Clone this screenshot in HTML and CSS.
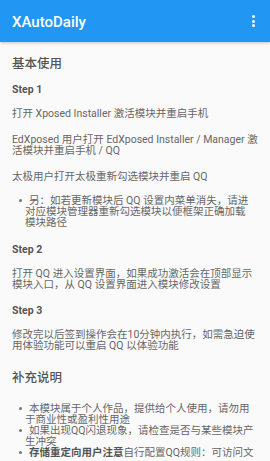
FILE: index.html
```html
<!DOCTYPE html>
<html lang="zh-CN">
<head>
<meta charset="utf-8">
<title>XAutoDaily</title>
<link rel="stylesheet" href="styles.css">
</head>
<body>
<header class="appbar">
  <span class="title">XAutoDaily</span>
  <span class="menu"><i></i><i></i><i></i></span>
</header>
<main class="content">
  <h2 class="section">基本使用</h2>
  <h3 class="step">Step 1</h3>
  <p class="text">打开 Xposed Installer 激活模块并重启手机</p>
  <p class="text">EdXposed 用户打开 EdXposed Installer / Manager 激活模块并重启手机 / QQ</p>
  <p class="text">太极用户打开太极重新勾选模块并重启 QQ</p>
  <ul class="list list-tight">
    <li>另：如若更新模块后 QQ 设置内菜单消失，请进对应模块管理器重新勾选模块以便框架正确加载模块路径</li>
  </ul>
  <h3 class="step">Step 2</h3>
  <p class="text">打开 QQ 进入设置界面，如果成功激活会在顶部显示模块入口，从 QQ 设置界面进入模块修改设置</p>
  <h3 class="step">Step 3</h3>
  <p class="text">修改完以后签到操作会在10分钟内执行，如需急迫使用体验功能可以重启 QQ 以体验功能</p>
  <h2 class="section section-gap">补充说明</h2>
  <ul class="list list-spaced">
    <li>本模块属于个人作品，提供给个人使用，请勿用于商业性或盈利性用途</li>
    <li>如果出现QQ闪退现象，请检查是否与某些模块产生冲突</li>
    <li><b class="strong">存储重定向用户注意</b>自行配置QQ规则：可访问文</li>
  </ul>
</main>
</body>
</html>
```
FILE: styles.css
```css
html, body {
  margin: 0;
  padding: 0;
}
body {
  background: #fafafa;
  font-family: Roboto, "Noto Sans CJK SC", sans-serif;
  color: #666;
}
.appbar {
  height: 42px;
  background: #2196f3;
  box-shadow: 0 1px 3px rgba(0, 0, 0, 0.22);
  display: flex;
  align-items: center;
  justify-content: space-between;
  padding: 0 15px 0 12px;
}
.title {
  color: #fff;
  font-size: 15px;
  font-weight: 500;
  line-height: 1;
  margin-top: 3px;
}
.menu {
  display: flex;
  flex-direction: column;
  gap: 1.5px;
}
.menu i {
  display: block;
  width: 3px;
  height: 3px;
  border-radius: 50%;
  background: #fff;
}
.content {
  padding: 14px 11px 0 12px;
}
.section {
  margin: 0 0 12px;
  font-size: 12.5px;
  line-height: 16px;
  font-weight: 500;
  color: #555;
}
.section-gap {
  margin-top: 19px;
}
.step {
  margin: 0 0 13px;
  font-size: 10.5px;
  line-height: 11px;
  font-weight: 700;
  color: #555;
}
.text {
  margin: 0 0 15px;
  font-size: 10.5px;
  line-height: 11px;
}
.list {
  list-style: none;
  margin: 0 4px 16px 0;
  padding: 0 0 0 13px;
  font-size: 10.5px;
  line-height: 11px;
}
.list-tight {
  margin-top: -2px;
}
.list-spaced {
  margin-top: 17px;
}
.list li {
  text-indent: -6.5px;
}
.list li::before {
  content: "";
  display: inline-block;
  text-indent: 0;
  width: 3px;
  height: 3px;
  border-radius: 50%;
  background: #777;
  margin-right: 7.5px;
  vertical-align: 2.5px;
}
.strong {
  font-weight: 700;
  color: #555;
  line-height: 11px;
}
```
